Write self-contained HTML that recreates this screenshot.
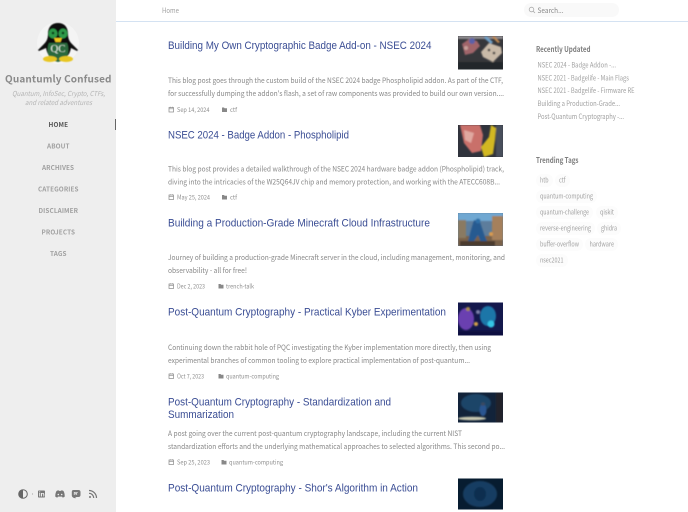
<!DOCTYPE html>
<html><head><meta charset="utf-8"><title>Quantumly Confused</title>
<style>
html,body{margin:0;padding:0;background:#fff;width:688px;height:512px;overflow:hidden}
svg{display:block;font-family:"Noto Sans CJK JP","Liberation Sans",sans-serif}
.t{font-family:"Liberation Sans",sans-serif;font-size:11.4px;fill:#3a4d94}
.b{font-size:7.4px;fill:#888}
.m{font-size:6.3px;fill:#909090}
.n{font-size:6.4px;font-weight:700;fill:#a0a0a0}
.r{font-size:7.1px;fill:#a0a0a0}
.h{font-size:7.8px;font-weight:700;fill:#7e7e7e}
.g{font-size:6.9px;fill:#a0a0a0}
.txt{filter:blur(.25px)}
</style></head><body>
<svg width="688" height="512" viewBox="0 0 688 512" xmlns="http://www.w3.org/2000/svg">
<defs>
<filter id="bl" x="-20%" y="-20%" width="140%" height="140%"><feGaussianBlur stdDeviation=".7"/></filter>
<filter id="bs" x="-20%" y="-20%" width="140%" height="140%"><feGaussianBlur stdDeviation=".4"/></filter>
<clipPath id="c1"><rect x="458" y="36" width="45" height="33.500"/></clipPath>
<clipPath id="c2"><rect x="458" y="125" width="45" height="32"/></clipPath>
<clipPath id="c3"><rect x="458" y="213" width="45" height="33"/></clipPath>
<clipPath id="c4"><rect x="458" y="302.500" width="45" height="33"/></clipPath>
<clipPath id="c5"><rect x="458" y="392.500" width="45" height="30"/></clipPath>
<clipPath id="c6"><rect x="458" y="478.500" width="45" height="31"/></clipPath>
</defs>
<rect width="688" height="512" fill="#fff"/>
<rect width="116" height="512" fill="#eeeeee"/>
<rect x="116" y="21" width="572" height="1" fill="#d4e2f2"/>
<rect x="115" y="119" width="1" height="11" fill="#666"/>

<!-- avatar -->
<circle cx="58" cy="43" r="21" fill="#f4f4f4"/>
<g filter="url(#bs)">
<path d="M58 23c-7 0-10 5-10 11 0 4-1 7-4 10l-6 6 1 1 7-3c1 5 3 8 5 10h14c3-2 5-5 6-10l6 3 1-1-6-6c-3-3-4-6-4-10 0-6-3-11-10-11z" fill="#0c0c0c"/>
<path d="M49 43h18c2 4 2 12-2 17l-7 2-7-2c-4-5-4-13-2-17z" fill="#2a6a3c"/>
<ellipse cx="53" cy="33.500" rx="4.500" ry="5" fill="#2f9a48"/>
<ellipse cx="63" cy="33.500" rx="4.500" ry="5" fill="#2f9a48"/>
<circle cx="53" cy="33" r="1.300" fill="#0b3a18"/><circle cx="63" cy="33" r="1.300" fill="#0b3a18"/>
<path d="M54 38h8l-1.500 4h-5z" fill="#eec61f"/>
<ellipse cx="50" cy="59" rx="7" ry="3" fill="#e8c622"/>
<ellipse cx="66" cy="59" rx="7" ry="3" fill="#e8c622"/>
<text x="50.500" y="52" font-family="Liberation Serif,serif" font-size="10" fill="#dfe8df" textLength="15" lengthAdjust="spacingAndGlyphs">QC</text>
</g>

<!-- images -->
<g clip-path="url(#c1)"><rect x="458" y="36" width="45" height="34" fill="#36373b"/><g filter="url(#bl)">
<rect x="458" y="36" width="45" height="3" fill="#8d8a8e"/><path d="M462 44l7-5 8 2 3 5-7 7-8 2z" fill="#a0656b"/><circle cx="472" cy="41" r="3" fill="#5a60a8"/><circle cx="466" cy="48" r="2" fill="#c8a09a"/>
<path d="M481 52l8-9 12 4 1 6-9 9-10-5z" fill="#c9baa8"/><circle cx="489" cy="50" r="1.300" fill="#333"/><circle cx="494" cy="53" r="1.300" fill="#333"/><path d="M486 36l7 6-2 2-7-6z" fill="#6ea0c8"/><path d="M494 36l6 6-2 1-6-6z" fill="#c28a50"/><rect x="458" y="62" width="45" height="8" fill="#24262a"/></g></g>
<g clip-path="url(#c2)"><rect x="458" y="125" width="45" height="32" fill="#30333c"/><g filter="url(#bl)">
<path d="M460 125h20l3 10-2 16-9 2-8-10z" fill="#c9706a"/><path d="M464 130l10 3-3 10-6-3z" fill="#e0a8a0"/><path d="M491 125l5 3-1 12-2 14-9 3-3-10 8-10z" fill="#d2b823"/><rect x="496" y="125" width="7" height="32" fill="#4a4f5c"/></g></g>
<g clip-path="url(#c3)"><rect x="458" y="213" width="45" height="33" fill="#5d7d9c"/><g filter="url(#bl)">
<rect x="458" y="213" width="45" height="8" fill="#6fa8d2"/><rect x="458" y="236" width="45" height="10" fill="#7a6248"/><rect x="492" y="216" width="11" height="24" fill="#a5805c"/><rect x="458" y="220" width="8" height="18" fill="#8a7a62"/>
<path d="M474 220l6 2 4 12 3 7-6 2-3-8-5 8-5-2 3-11z" fill="#285a90"/><circle cx="478" cy="221" r="2.500" fill="#2e6fa8"/><rect x="460" y="241" width="35" height="5" fill="#4b3a2e"/><circle cx="491" cy="234" r="2" fill="#d89a50"/></g></g>
<g clip-path="url(#c4)"><rect x="458" y="302.500" width="45" height="33" fill="#14184c"/><g filter="url(#bl)">
<ellipse cx="466" cy="319" rx="8" ry="11" fill="#6b3fb0"/><ellipse cx="488" cy="316" rx="8" ry="10" fill="#1a76a8"/><circle cx="491" cy="324" r="3.500" fill="#35c5e5"/><circle cx="476" cy="324" r="2" fill="#d2a04a"/><circle cx="468" cy="309" r="2" fill="#a88a4a"/><circle cx="478" cy="312" r="2" fill="#7a80a8"/><rect x="458" y="331" width="45" height="5" fill="#101040"/></g></g>
<g clip-path="url(#c5)"><rect x="458" y="392.500" width="45" height="30" fill="#12233a"/><g filter="url(#bl)">
<ellipse cx="476" cy="403" rx="15" ry="9" fill="#1d4468"/><ellipse cx="483" cy="410" rx="3.500" ry="6" fill="#2a5590"/><circle cx="483" cy="404" r="1.800" fill="#3a4a60"/><ellipse cx="472" cy="418.500" rx="14" ry="1.800" fill="#c8c8b0"/><rect x="496" y="392.500" width="7" height="30" fill="#22242a"/></g></g>
<g clip-path="url(#c6)"><rect x="458" y="478.500" width="45" height="31" fill="#071c30"/><g filter="url(#bl)">
<ellipse cx="480" cy="494" rx="17" ry="13" fill="#143c62"/><ellipse cx="480" cy="494" rx="6" ry="7" fill="#0d2f50"/></g></g>

<!-- sidebar icons -->
<g fill="#777">
<circle cx="23" cy="494" r="4.300" fill="none" stroke="#666" stroke-width="1"/><path d="M23 489.700a4.300 4.300 0 0 0 0 8.600z" fill="#666"/>
<circle cx="32.500" cy="494" r=".6" fill="#aaa"/>
<rect x="38" y="490.500" width="7" height="7" rx=".8" fill="#777"/><rect x="39.200" y="493" width="1" height="3.500" fill="#eee"/><rect x="39.200" y="491.400" width="1" height="1" fill="#eee"/><path d="M41 493h1v.6c.7-.9 2.300-.9 2.300.8v2.100h-1v-1.900c0-1-1.300-1-1.300 0v1.900h-1z" fill="#eee"/>
<path d="M56.500 491c1-.6 2-.7 2-.7l.4.6h2.200l.4-.6s1 .1 2 .7c1 1.800 1.300 3.800 1.200 5.600-1 .7-2 1-2 1l-.6-1h-4.200l-.6 1s-1-.3-2-1c-.1-1.800.2-3.800 1.200-5.600z" fill="#777"/><circle cx="58.300" cy="494.500" r=".8" fill="#eee"/><circle cx="61.700" cy="494.500" r=".8" fill="#eee"/>
<path d="M73.500 490h5c1.200 0 2 .8 2 2v3c0 1.200-.8 2-2 2h-3c-.5 0-.7.5 1 .8l-1 .4c-2-.2-3.700-1-3.700-3v-3.200c0-1.200.5-2 1.700-2z" fill="#777"/><path d="M74.200 495v-2.500h1v2M75.200 493h1.500M76.700 495v-2.500h1" stroke="#eee" stroke-width=".7" fill="none"/>
<circle cx="90" cy="497" r="1" fill="#777"/><path d="M89 493.300a4.700 4.700 0 0 1 4.700 4.700M89 490.500a7.500 7.500 0 0 1 7.500 7.500" fill="none" stroke="#777" stroke-width="1.200"/>
</g>

<!-- search -->
<rect x="524" y="3" width="95" height="14" rx="7" fill="#f9f9f9"/>
<circle cx="531.500" cy="9.500" r="2.300" fill="none" stroke="#aaa" stroke-width=".8"/><path d="M533.200 11.200l1.800 1.800" stroke="#aaa" stroke-width=".8"/>

<!-- tag pills -->
<g fill="#fcfcfc">
<rect x="536" y="174" width="17" height="13" rx="6.500"/><rect x="555" y="174" width="15" height="13" rx="6.500"/>
<rect x="536" y="190" width="61" height="13" rx="6.500"/>
<rect x="536" y="206" width="57" height="13" rx="6.500"/><rect x="596" y="206" width="22" height="13" rx="6.500"/>
<rect x="536" y="222" width="59" height="13" rx="6.500"/><rect x="597" y="222" width="24" height="13" rx="6.500"/>
<rect x="536" y="238" width="47" height="13" rx="6.500"/><rect x="585" y="238" width="33" height="13" rx="6.500"/>
<rect x="536" y="254" width="32" height="13" rx="6.500"/>
</g>

<!-- meta icons -->
<g fill="none" stroke="#888" stroke-width=".7">
<rect x="169" y="107.500" width="4.500" height="4.500"/><path d="M169 108.800h4.500M170.200 106.700v1M172.300 106.700v1"/>
<rect x="169" y="195" width="4.500" height="4.500"/><path d="M169 196.300h4.500M170.200 194.200v1M172.300 194.200v1"/>
<rect x="169" y="284" width="4.500" height="4.500"/><path d="M169 285.300h4.500M170.200 283.200v1M172.300 283.200v1"/>
<rect x="169" y="374" width="4.500" height="4.500"/><path d="M169 375.300h4.500M170.200 373.200v1M172.300 373.200v1"/>
<rect x="169" y="460" width="4.500" height="4.500"/><path d="M169 461.300h4.500M170.200 459.200v1M172.300 459.200v1"/>
</g>
<g fill="#888">
<path d="M222 107.500h2l.6.7h2.400v3.800h-5z"/><path d="M222 195h2l.6.7h2.400v3.800h-5z"/><path d="M218.500 284h2l.6.7h2.400v3.800h-5z"/><path d="M218.500 374h2l.6.7h2.400v3.800h-5z"/><path d="M221.500 460h2l.6.7h2.400v3.800h-5z"/>
</g>

<g class="txt">
<text class="r" x="162" y="13" textLength="17" lengthAdjust="spacingAndGlyphs">Home</text>
<text class="r" x="537.500" y="13" textLength="26" lengthAdjust="spacingAndGlyphs" style="fill:#888">Search...</text>

<text x="5" y="82.500" font-size="10" font-weight="700" fill="#8a8a8a" textLength="106.500" lengthAdjust="spacing">Quantumly Confused</text>
<text x="12" y="96" font-size="6.800" font-style="italic" fill="#b4b4b4" textLength="93" lengthAdjust="spacingAndGlyphs">Quantum, InfoSec, Crypto, CTFs,</text>
<text x="25" y="105" font-size="6.800" font-style="italic" fill="#b4b4b4" textLength="67" lengthAdjust="spacingAndGlyphs">and related adventures</text>

<text class="n" x="48.500" y="127" textLength="19.500" lengthAdjust="spacing" style="fill:#555">HOME</text>
<text class="n" x="47" y="148.500" textLength="22.500" lengthAdjust="spacing">ABOUT</text>
<text class="n" x="42" y="170" textLength="32" lengthAdjust="spacing">ARCHIVES</text>
<text class="n" x="38" y="191.500" textLength="40.500" lengthAdjust="spacing">CATEGORIES</text>
<text class="n" x="38.500" y="213" textLength="39.500" lengthAdjust="spacing">DISCLAIMER</text>
<text class="n" x="41.500" y="234.500" textLength="33.500" lengthAdjust="spacing">PROJECTS</text>
<text class="n" x="50" y="256" textLength="16.500" lengthAdjust="spacing">TAGS</text>

<text class="t" x="168" y="49" textLength="263.500" lengthAdjust="spacingAndGlyphs">Building My Own Cryptographic Badge Add-on - NSEC 2024</text>
<text class="b" x="168" y="83" textLength="335" lengthAdjust="spacingAndGlyphs">This blog post goes through the custom build of the NSEC 2024 badge Phospholipid addon. As part of the CTF,</text>
<text class="b" x="168" y="96" textLength="336" lengthAdjust="spacingAndGlyphs">for successfully dumping the addon's flash, a set of raw components was provided to build our own version....</text>
<text class="m" x="177" y="112" textLength="32.500" lengthAdjust="spacingAndGlyphs">Sep 14, 2024</text>
<text class="m" x="230" y="112" textLength="7" lengthAdjust="spacingAndGlyphs">ctf</text>

<text class="t" x="168" y="138.500" textLength="181" lengthAdjust="spacingAndGlyphs">NSEC 2024 - Badge Addon - Phospholipid</text>
<text class="b" x="168" y="171.500" textLength="336" lengthAdjust="spacingAndGlyphs">This blog post provides a detailed walkthrough of the NSEC 2024 hardware badge addon (Phospholipid) track,</text>
<text class="b" x="168" y="184.500" textLength="332" lengthAdjust="spacingAndGlyphs">diving into the intricacies of the W25Q64JV chip and memory protection, and working with the ATECC608B...</text>
<text class="m" x="177" y="199.500" textLength="33" lengthAdjust="spacingAndGlyphs">May 25, 2024</text>
<text class="m" x="230" y="199.500" textLength="7" lengthAdjust="spacingAndGlyphs">ctf</text>

<text class="t" x="168" y="226.500" textLength="262" lengthAdjust="spacingAndGlyphs">Building a Production-Grade Minecraft Cloud Infrastructure</text>
<text class="b" x="168" y="260" textLength="337" lengthAdjust="spacingAndGlyphs">Journey of building a production-grade Minecraft server in the cloud, including management, monitoring, and</text>
<text class="b" x="168" y="273" textLength="79" lengthAdjust="spacingAndGlyphs">observability - all for free!</text>
<text class="m" x="177" y="288.500" textLength="28" lengthAdjust="spacingAndGlyphs">Dec 2, 2023</text>
<text class="m" x="226" y="288.500" textLength="28" lengthAdjust="spacingAndGlyphs">trench-talk</text>

<text class="t" x="168" y="315.500" textLength="278" lengthAdjust="spacingAndGlyphs">Post-Quantum Cryptography - Practical Kyber Experimentation</text>
<text class="b" x="168" y="350" textLength="323" lengthAdjust="spacingAndGlyphs">Continuing down the rabbit hole of PQC investigating the Kyber implementation more directly, then using</text>
<text class="b" x="168" y="363" textLength="302" lengthAdjust="spacingAndGlyphs">experimental branches of common tooling to explore practical implementation of post-quantum...</text>
<text class="m" x="177" y="378.500" textLength="27" lengthAdjust="spacingAndGlyphs">Oct 7, 2023</text>
<text class="m" x="226" y="378.500" textLength="53" lengthAdjust="spacingAndGlyphs">quantum-computing</text>

<text class="t" x="168" y="405.500" textLength="223" lengthAdjust="spacingAndGlyphs">Post-Quantum Cryptography - Standardization and</text>
<text class="t" x="168" y="418" textLength="66" lengthAdjust="spacingAndGlyphs">Summarization</text>
<text class="b" x="168" y="436" textLength="294" lengthAdjust="spacingAndGlyphs">A post going over the current post-quantum cryptography landscape, including the current NIST</text>
<text class="b" x="168" y="449" textLength="337" lengthAdjust="spacingAndGlyphs">standardization efforts and the underlying mathematical approaches to selected algorithms. This second po...</text>
<text class="m" x="177" y="464.500" textLength="33" lengthAdjust="spacingAndGlyphs">Sep 25, 2023</text>
<text class="m" x="229" y="464.500" textLength="54" lengthAdjust="spacingAndGlyphs">quantum-computing</text>

<text class="t" x="168" y="491.500" textLength="250" lengthAdjust="spacingAndGlyphs">Post-Quantum Cryptography - Shor's Algorithm in Action</text>

<text class="h" x="536" y="52" textLength="54.500" lengthAdjust="spacingAndGlyphs">Recently Updated</text>
<text class="r" x="537.500" y="67.500" textLength="78.500" lengthAdjust="spacingAndGlyphs">NSEC 2024 - Badge Addon -...</text>
<text class="r" x="537.500" y="80.500" textLength="91.500" lengthAdjust="spacingAndGlyphs">NSEC 2021 - Badgelife - Main Flags</text>
<text class="r" x="537.500" y="93" textLength="97" lengthAdjust="spacingAndGlyphs">NSEC 2021 - Badgelife - Firmware RE</text>
<text class="r" x="537.500" y="106" textLength="82.500" lengthAdjust="spacingAndGlyphs">Building a Production-Grade...</text>
<text class="r" x="537.500" y="119" textLength="86.500" lengthAdjust="spacingAndGlyphs">Post-Quantum Cryptography -...</text>

<text class="h" x="536" y="163" textLength="42.500" lengthAdjust="spacingAndGlyphs">Trending Tags</text>
<text class="g" x="540" y="182.500" textLength="8.500" lengthAdjust="spacingAndGlyphs">htb</text>
<text class="g" x="559" y="182.500" textLength="6.500" lengthAdjust="spacingAndGlyphs">ctf</text>
<text class="g" x="540" y="198.500" textLength="53" lengthAdjust="spacingAndGlyphs">quantum-computing</text>
<text class="g" x="540" y="214.500" textLength="49" lengthAdjust="spacingAndGlyphs">quantum-challenge</text>
<text class="g" x="600" y="214.500" textLength="14" lengthAdjust="spacingAndGlyphs">qiskit</text>
<text class="g" x="540" y="230.500" textLength="51" lengthAdjust="spacingAndGlyphs">reverse-engineering</text>
<text class="g" x="601" y="230.500" textLength="16" lengthAdjust="spacingAndGlyphs">ghidra</text>
<text class="g" x="540" y="246.500" textLength="39" lengthAdjust="spacingAndGlyphs">buffer-overflow</text>
<text class="g" x="589.500" y="246.500" textLength="24.500" lengthAdjust="spacingAndGlyphs">hardware</text>
<text class="g" x="540" y="262.500" textLength="23.500" lengthAdjust="spacingAndGlyphs">nsec2021</text>
</g>
</svg>
</body></html>
